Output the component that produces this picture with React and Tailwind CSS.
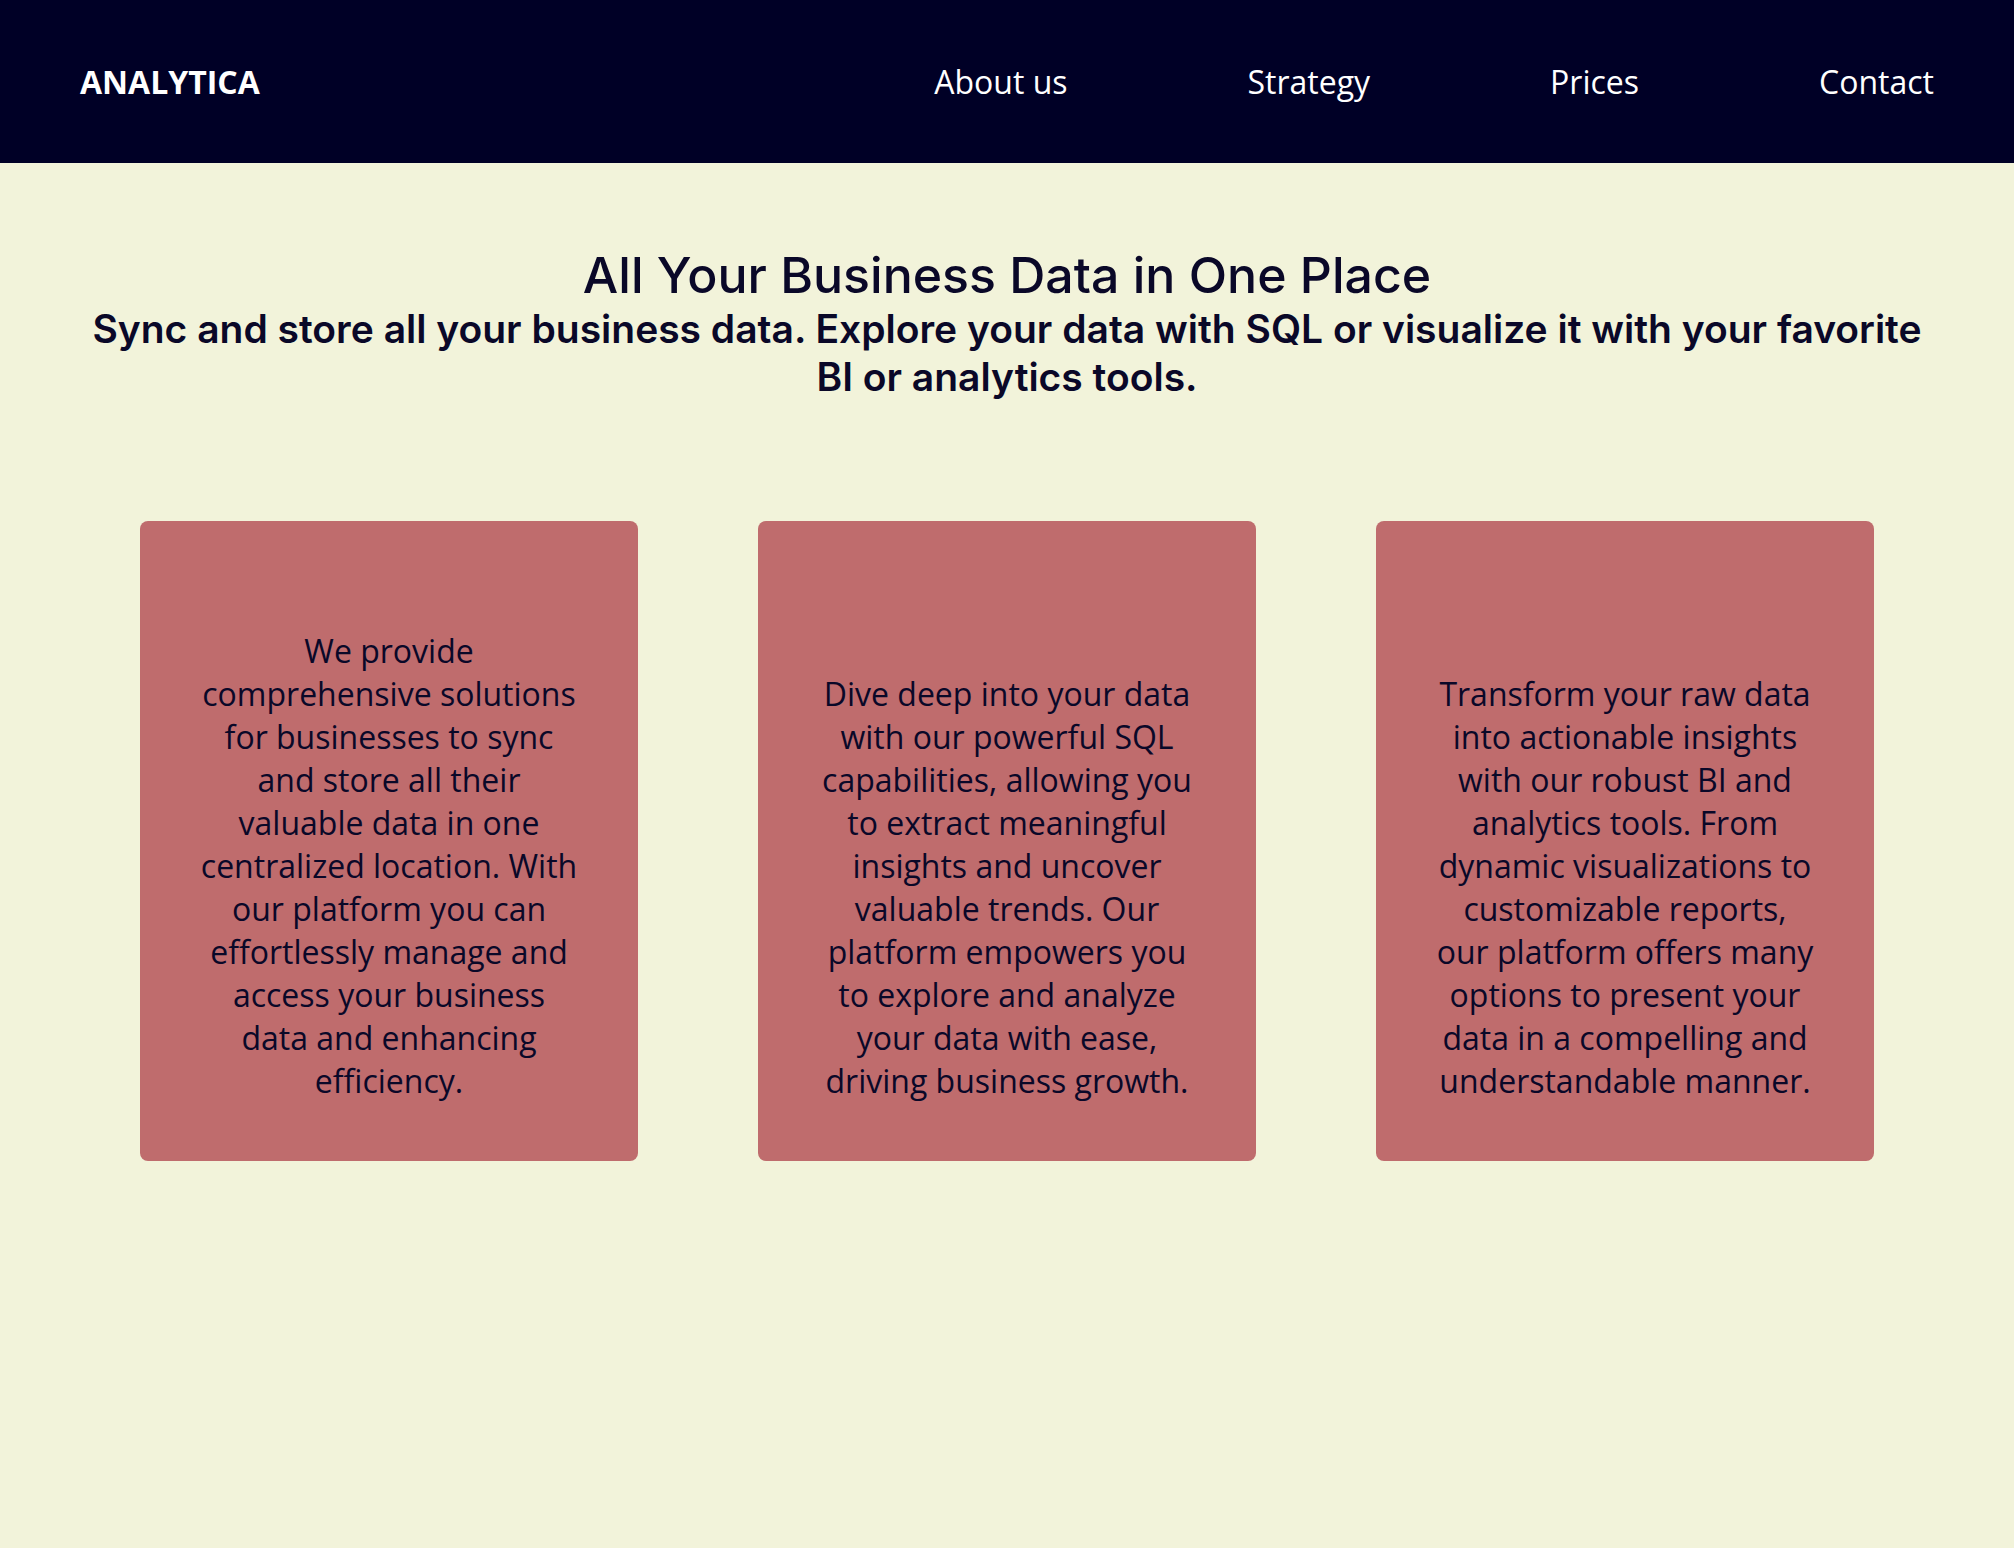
const cards = [
  'We provide comprehensive solutions for businesses to sync and store all their valuable data in one centralized location. With our platform you can effortlessly manage and access your business data and enhancing efficiency.',
  'Dive deep into your data with our powerful SQL capabilities, allowing you to extract meaningful insights and uncover valuable trends. Our platform empowers you to explore and analyze your data with ease, driving business growth.',
  'Transform your raw data into actionable insights with our robust BI and analytics tools. From dynamic visualizations to customizable reports, our platform offers many options to present your data in a compelling and understandable manner.',
]

const links = ['About us', 'Strategy', 'Prices', 'Contact']

export default function App() {
  return (
    <div className="min-h-screen bg-[#f2f3da] font-['Open_Sans',sans-serif]">
      <header className="h-[163px] bg-[#000026] px-[80px] flex items-center justify-between text-white">
        <div className="text-[32px] font-bold">ANALYTICA</div>
        <nav className="flex items-center gap-[180px] text-[32px]">
          {links.map((l) => (
            <a key={l} href="#" className="text-white">{l}</a>
          ))}
        </nav>
      </header>

      <main className="pt-[82px] px-[80px] text-[#0a0828]">
        <div className="text-center font-['Inter',sans-serif]">
          <h1 className="text-[50px] leading-[60px] font-medium">All Your Business Data in One Place</h1>
          <p className="text-[39px] leading-[48px] font-semibold">
            Sync and store all your business data. Explore your data with SQL or visualize it with your favorite BI or analytics tools.
          </p>
        </div>

        <div className="mt-[120px] px-[60px] grid grid-cols-3 gap-[120px]">
          {cards.map((c, i) => (
            <div key={i} className="bg-[#bf6c6d] rounded-lg px-[60px] pt-[108px] pb-[59px] flex flex-col justify-end">
              <p className="text-[32px] leading-[43px] text-center text-[#0a0828]">{c}</p>
            </div>
          ))}
        </div>
      </main>
    </div>
  )
}
